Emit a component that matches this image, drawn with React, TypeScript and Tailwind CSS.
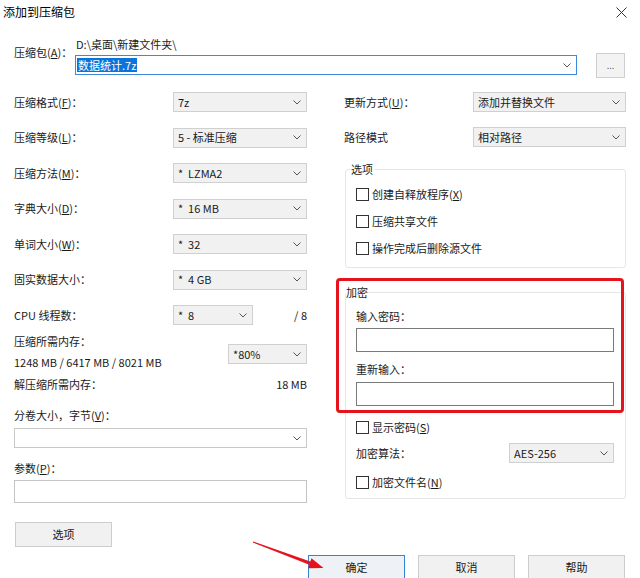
import React from "react";

type Row = { name: string; key?: string; value: string };

const leftRows: Row[] = [
  { name: "压缩格式", key: "F", value: "7z" },
  { name: "压缩等级", key: "L", value: "5 - 标准压缩" },
  { name: "压缩方法", key: "M", value: "*  LZMA2" },
  { name: "字典大小", key: "D", value: "*  16 MB" },
  { name: "单词大小", key: "W", value: "*  32" },
  { name: "固实数据大小", value: "*  4 GB" },
];

function Chevron() {
  return (
    <svg width="8" height="5" viewBox="0 0 8 5">
      <path d="M0.5 0.5 L4 4 L7.5 0.5" fill="none" stroke="#555" strokeWidth="1" />
    </svg>
  );
}

function Label({ name, k }: { name: string; k?: string }) {
  return (
    <>
      {name}
      {k && (
        <>
          (<u>{k}</u>)
        </>
      )}
      ：
    </>
  );
}

function Select({ value, className = "" }: { value: string; className?: string }) {
  return (
    <div
      className={`h-[20px] flex items-center justify-between pl-[4px] pr-[5px] border border-[#d0d0d0] bg-[#f1f1f1] ${className}`}
    >
      <span className="whitespace-pre leading-none">{value}</span>
      <Chevron />
    </div>
  );
}

function Checkbox({ children, className = "" }: { children: React.ReactNode; className?: string }) {
  return (
    <div className={`flex items-center h-[16px] ${className}`}>
      <div className="w-[13px] h-[13px] border border-[#333] bg-white" />
      <span className="ml-[3px]">{children}</span>
    </div>
  );
}

function Button({ children, primary }: { children: React.ReactNode; primary?: boolean }) {
  return (
    <div
      className={`w-[97px] h-[25px] flex items-center justify-center border ${
        primary ? "border-[#2f86d6] bg-[#eef2f6]" : "border-[#cdcdcd] bg-[#f1f1f1]"
      }`}
    >
      {children}
    </div>
  );
}

export default function App() {
  return (
    <div className="relative w-[640px] h-[578px] overflow-hidden bg-white text-[11px] text-[#1a1a1a] font-['Noto_Sans_CJK_SC',sans-serif]">
      {/* 标题栏 */}
      <div className="h-[24px] flex items-center justify-between pl-[3px] pr-[13px]">
        <span className="text-[12px] text-black">添加到压缩包</span>
        <svg width="11" height="11" viewBox="0 0 11 11">
          <path d="M0.5 0.5L10.5 10.5M10.5 0.5L0.5 10.5" stroke="#333" strokeWidth="1" />
        </svg>
      </div>

      {/* 压缩包路径 */}
      <div className="mt-[13px] flex pl-[14px]">
        <div className="w-[61px] pt-[8px] leading-[14px]">
          <Label name="压缩包" k="A" />
        </div>
        <div className="flex flex-col">
          <div className="leading-[14px] pl-[1px]">{"D:\\桌面\\新建文件夹\\"}</div>
          <div className="mt-[4px] w-[502px] h-[20px] border border-[#3d8ad8] bg-white flex items-center justify-between pl-[1px] pr-[5px]">
            <span className="bg-[#0a74da] text-white leading-[14px] px-[1px]">数据统计.7z</span>
            <Chevron />
          </div>
        </div>
        <div className="ml-[19px] mt-[16px] w-[29px] h-[25px] border border-[#cfcfcf] bg-[#f3f3f3] flex items-center justify-center text-[#666] text-[9px]">
          ...
        </div>
      </div>

      {/* 主体两栏 */}
      <div className="mt-[14px] flex pl-[14px]">
        {/* 左栏 */}
        <div className="w-[293px] flex flex-col">
          <div className="flex flex-col gap-[15.5px]">
            {leftRows.map((r) => (
              <div key={r.name} className="flex items-center h-[20px]">
                <div className="w-[159px]">
                  <Label name={r.name} k={r.key} />
                </div>
                <Select value={r.value} className="w-[134px]" />
              </div>
            ))}
            <div className="flex items-center h-[20px]">
              <div className="w-[159px]">CPU 线程数：</div>
              <Select value="*  8" className="w-[80px]" />
              <div className="flex-1 text-right">/ 8</div>
            </div>
          </div>

          <div className="mt-[8px] flex justify-between">
            <div>
              <div className="leading-[16px]">压缩所需内存：</div>
              <div className="mt-[5px] leading-[16px]">1248 MB / 6417 MB / 8021 MB</div>
            </div>
            <Select value="*80%" className="mt-[11px] w-[79px]" />
          </div>

          <div className="mt-[6px] flex justify-between leading-[16px]">
            <span>解压缩所需内存：</span>
            <span>18 MB</span>
          </div>

          <div className="mt-[15px] leading-[16px]">分卷大小，字节(<u>V</u>)：</div>
          <div className="mt-[5px] h-[20px] border border-[#c9c9c9] bg-white flex items-center justify-end pr-[5px]">
            <Chevron />
          </div>

          <div className="mt-[12px] leading-[16px]">
            <Label name="参数" k="P" />
          </div>
          <div className="mt-[4px] h-[23px] border border-[#c4c4c4] bg-white" />

          <div className="mt-[19px] ml-[1px]">
            <Button>选项</Button>
          </div>
        </div>

        {/* 右栏 */}
        <div className="ml-[37px] w-[282px] flex flex-col">
          <div className="flex flex-col gap-[15px]">
            <div className="flex items-center h-[20px]">
              <div className="w-[129px]">
                <Label name="更新方式" k="U" />
              </div>
              <Select value="添加并替换文件" className="w-[153px]" />
            </div>
            <div className="flex items-center h-[20px]">
              <div className="w-[129px]">路径模式</div>
              <Select value="相对路径" className="w-[153px]" />
            </div>
          </div>

          <fieldset className="mt-[14px] ml-[1px] w-[281px] border border-[#e6e6e6] rounded-[3px]">
            <legend className="ml-[4px] px-[1px] leading-[16px]">选项</legend>
            <div className="pl-[10px] pb-[11px] pt-[9px] flex flex-col gap-[11px]">
              <Checkbox>
                创建自释放程序(<u>X</u>)
              </Checkbox>
              <Checkbox>压缩共享文件</Checkbox>
              <Checkbox>操作完成后删除源文件</Checkbox>
            </div>
          </fieldset>

          <fieldset className="mt-[16px] ml-[1px] w-[281px] border border-[#e6e6e6] rounded-[3px]">
            <legend className="leading-[16px]">加密</legend>
            <div className="pl-[10px] pr-[11px] pb-[8px]">
              <div className="mt-[8px] leading-[16px]">输入密码：</div>
              <div className="mt-[4px] h-[24px] border border-[#7a7a7a] bg-white" />
              <div className="mt-[9px] leading-[16px]">重新输入：</div>
              <div className="mt-[5px] h-[24px] border border-[#7a7a7a] bg-white" />
              <Checkbox className="mt-[13px]">
                显示密码(<u>S</u>)
              </Checkbox>
              <div className="mt-[8px] flex items-center justify-between h-[20px]">
                <span>加密算法：</span>
                <Select value="AES-256" className="w-[105px]" />
              </div>
              <Checkbox className="mt-[11px]">
                加密文件名(<u>N</u>)
              </Checkbox>
            </div>
          </fieldset>
        </div>
      </div>

      {/* 底部按钮 */}
      <div className="mt-[8px] flex justify-end gap-[13px] pr-[15px]">
        <Button primary>确定</Button>
        <Button>取消</Button>
        <Button>帮助</Button>
      </div>

      {/* 标注：红框与箭头 */}
      <div className="absolute left-[336px] top-[278px] w-[288px] h-[135px] border-[3px] border-[#e5141c] rounded-[4px]" />
      <svg className="absolute left-0 top-0" width="640" height="578" viewBox="0 0 640 578">
        <polygon
          points="253.2,541.4 310.3,561.6 311.5,558.3 323.5,568 308.1,568.2 309.3,564.8 252.8,542.6"
          fill="#e5141c"
        />
      </svg>
    </div>
  );
}
